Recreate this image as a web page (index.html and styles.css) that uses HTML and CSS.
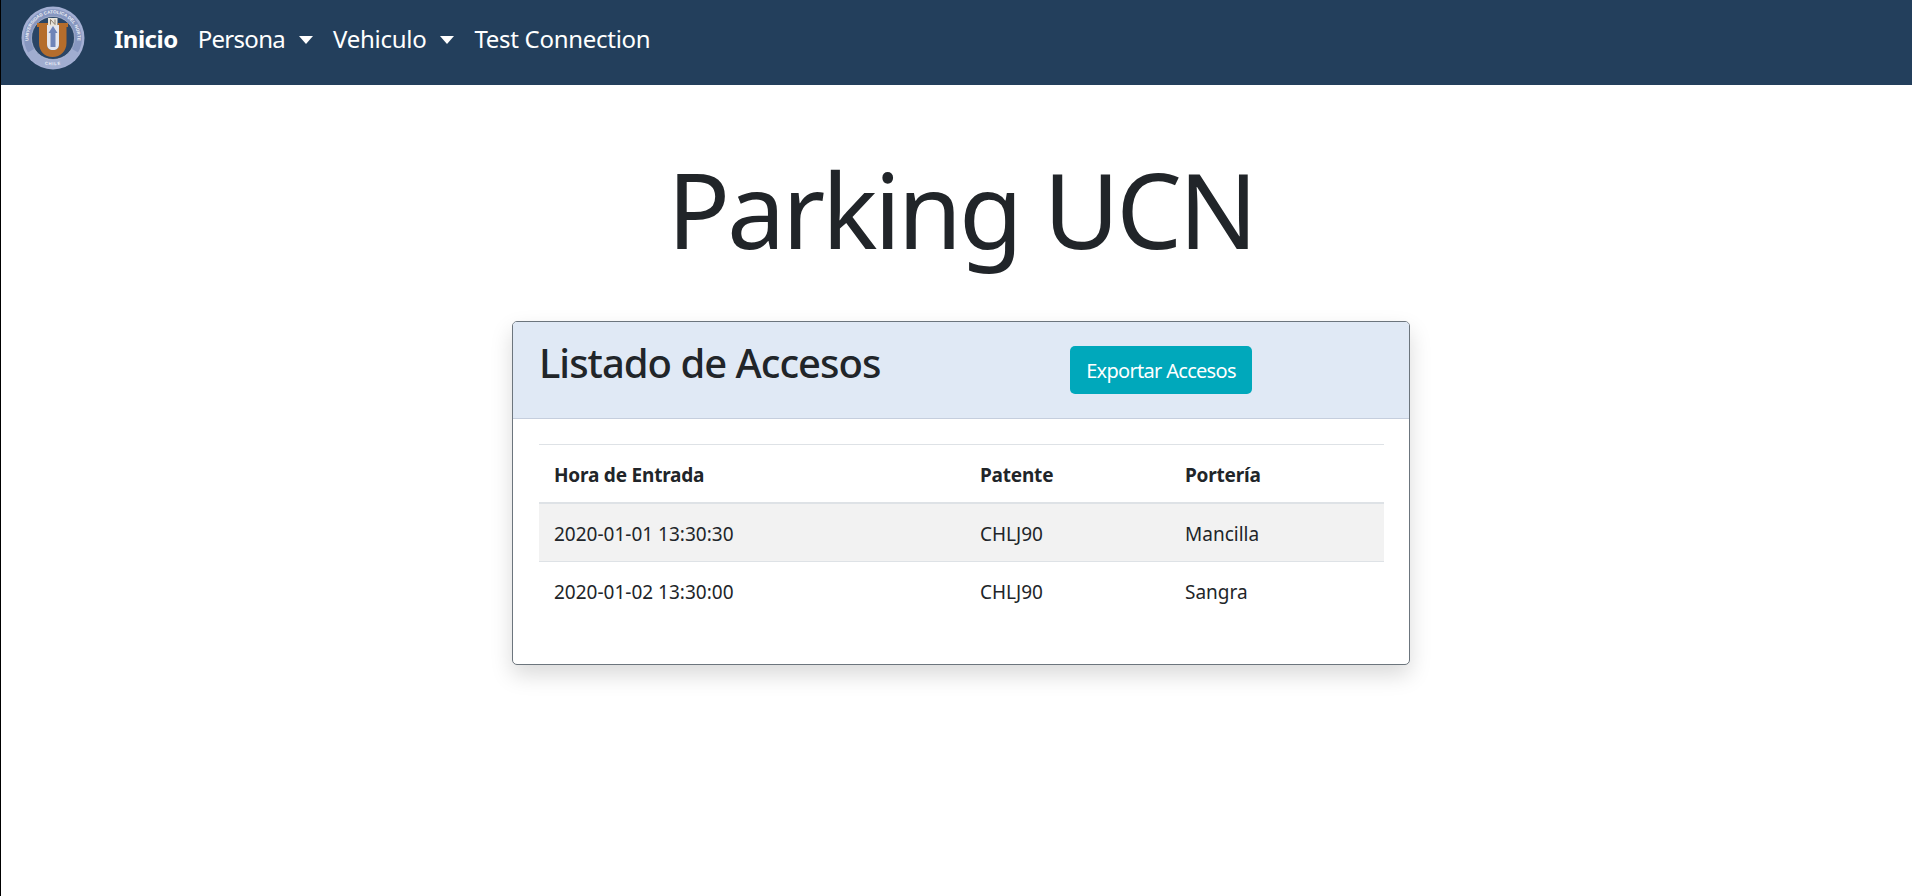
FILE: index.html
```html
<!DOCTYPE html>
<html lang="es">
<head>
<meta charset="utf-8">
<title>Parking UCN</title>
<link rel="stylesheet" href="styles.css">
</head>
<body>
<nav class="navbar">
  <svg class="logo" viewBox="0 0 64 64" width="64" height="64" aria-label="Logo UCN">
    <defs>
      <path id="arcTop" d="M10.800 44.200A24.500 24.500 0 1 1 53.200 44.200"/>
      <path id="arcBottom" d="M20 57.500Q32 61 44 57.500"/>
    </defs>
    <circle cx="32" cy="32" r="31.500" fill="#a3afd3"/>
    <circle cx="32" cy="32" r="29" fill="#8797c0"/>
    <path d="M6 47A30 30 0 0 0 58 47L32 32Z" fill="#a0add0"/>
    <circle cx="32" cy="32" r="21.500" fill="#2a4565" stroke="#c5cde2" stroke-width=".6"/>
    <text class="logo-text"><textPath href="#arcTop" startOffset="50%" text-anchor="middle">UNIVERSIDAD CATOLICA DEL NORTE</textPath></text>
    <text class="logo-text logo-chile"><textPath href="#arcBottom" startOffset="50%" text-anchor="middle">CHILE</textPath></text>
    <path d="M16 17H27V21H26V38C26 42 28 44 32 44C36 44 38 42 38 38V21H37V17H47V21H45.500V37C45.500 45 39.500 51 31.500 51C23.500 51 18 45 18 37V21H16Z" fill="#b56d2c"/>
    <path d="M26 19H38V38C38 42 36 44 32 44C28 44 26 42 26 38Z" fill="#e4e6ef"/>
    <path d="M32 20L36.500 27H34.500V41H29.500V27H27.500Z" fill="#6f84b8"/>
    <rect x="27" y="12" width="9.500" height="8" fill="#e9e4da"/>
    <path d="M29.500 18.500V13.500L34 18.500V13.500" fill="none" stroke="#8a7f70" stroke-width="1"/>
  </svg>
  <ul class="nav-list">
    <li><a class="nav-link active" href="#">Inicio</a></li>
    <li><a class="nav-link caret tight" href="#">Persona</a></li>
    <li><a class="nav-link caret wide" href="#">Vehiculo</a></li>
    <li><a class="nav-link wide" href="#">Test Connection</a></li>
  </ul>
</nav>
<main class="content">
  <h1 class="title">Parking UCN</h1>
  <section class="card">
    <header class="card-header">
      <h2 class="card-title">Listado de Accesos</h2>
      <a class="btn" href="#">Exportar Accesos</a>
    </header>
    <div class="card-body">
      <table class="table">
        <thead>
          <tr><th class="col-a">Hora de Entrada</th><th class="col-b">Patente</th><th>Portería</th></tr>
        </thead>
        <tbody>
          <tr class="odd"><td>2020-01-01 13:30:30</td><td>CHLJ90</td><td>Mancilla</td></tr>
          <tr><td>2020-01-02 13:30:00</td><td>CHLJ90</td><td>Sangra</td></tr>
        </tbody>
      </table>
    </div>
  </section>
</main>
</body>
</html>
```
FILE: styles.css
```css
* { box-sizing: border-box; }
html, body { height: 100%; }
body {
  margin: 0;
  border-left: 1px solid #000;
  background: #fff;
  color: #212529;
  font-family: "Noto Sans", "Open Sans", sans-serif;
  font-size: 19px;
  line-height: 1.5;
  overflow: hidden;
}
.navbar {
  display: flex;
  align-items: center;
  height: 85px;
  padding-left: 20px;
  background: #233f5c;
}
.logo { flex: none; margin-top: -10px; }
.logo-text { font-size: 4.500px; fill: #eef0f7; font-weight: 600; font-family: "Liberation Sans", sans-serif; }
.logo-chile { font-size: 4.200px; letter-spacing: .8px; }
.nav-list {
  display: flex;
  align-items: center;
  list-style: none;
  margin: 0 0 0 19px;
  padding: 0;
}
.nav-link {
  display: block;
  padding: 0 10px;
  color: #fff;
  font-size: 24px;
  line-height: 36px;
  letter-spacing: -.5px;
  text-decoration: none;
  white-space: nowrap;
  margin-top: -8px;
}
.nav-link.active { font-weight: 700; }
.nav-link.tight { letter-spacing: -.7px; }
.nav-link.wide { letter-spacing: -.28px; }
.caret::after {
  content: "";
  display: inline-block;
  margin-left: 14px;
  vertical-align: 4px;
  border-top: 8px solid #fff;
  border-left: 7px solid transparent;
  border-right: 7px solid transparent;
}
.content {
  display: flex;
  flex-direction: column;
  align-items: center;
  padding-left: 9px;
}
.title {
  margin: 0;
  padding-top: 62px;
  height: 236px;
  font-size: 104px;
  font-weight: 400;
  line-height: 1.2;
  letter-spacing: -3.2px;
}
.card {
  width: 898px;
  height: 344px;
  border: 1px solid #6c757d;
  border-radius: 5px;
  background: #fff;
  box-shadow: 0 10px 22px rgba(0, 0, 0, .15);
}
.card-header {
  display: flex;
  align-items: flex-start;
  height: 97px;
  padding: 17px 26px 0;
  background: #e0e9f5;
  border-bottom: 1px solid #c5cedd;
  border-radius: 4px 4px 0 0;
}
.card-title {
  margin: 0;
  width: 531px;
  font-size: 40px;
  font-weight: 500;
  line-height: 1.2;
  letter-spacing: -1px;
}
.btn {
  margin-top: 7px;
  width: 182px;
  height: 48px;
  border-radius: 5px;
  background: #00a8bb;
  color: #fff;
  font-size: 20px;
  line-height: 50px;
  text-align: center;
  text-decoration: none;
  letter-spacing: -.7px;
}
.card-body { padding: 25px 25px 0 26px; }
.table {
  width: 845px;
  border-collapse: collapse;
  table-layout: fixed;
}
.table th, .table td {
  padding: 17px 15px 13px;
  text-align: left;
  line-height: 27px;
}
.table th { border-top: 1px solid #dee2e6; border-bottom: 2px solid #dee2e6; font-weight: 700; letter-spacing: -.2px; }
.table td { border-bottom: 1px solid #dee2e6; }
.table tbody tr:last-child td { border-bottom: 0; }
.col-a { width: 426px; }
.col-b { width: 205px; }
.odd { background: #f2f2f2; }
```
